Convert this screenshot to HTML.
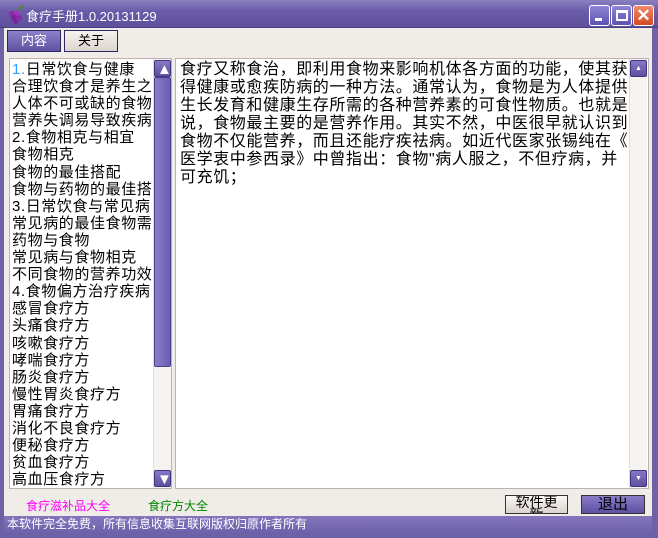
<!DOCTYPE html>
<html><head><meta charset="utf-8"><style>
*{margin:0;padding:0;box-sizing:border-box}
body{width:658px;height:538px;overflow:hidden;background:#fff;font-family:"Liberation Sans","Noto Sans CJK SC","WenQuanYi Zen Hei",sans-serif;position:relative}
.abs{position:absolute}
#win{left:0;top:0;width:658px;height:538px;background:#6f61a8}
#title{left:0;top:0;width:658px;height:28px;background:linear-gradient(#8b80c0,#6a5ca8 40%,#5e509c);border-bottom:1px solid #4a3e84}
#title span{position:absolute;left:26px;top:6px;color:#fff;font-size:13px;}
#body{left:4px;top:28px;width:648px;height:488px;background:#f0ece8}
.tb{top:2px;width:54px;height:22px;font-size:13px;text-align:center;line-height:20px;border:1px solid #2e2860}
#list{left:9px;top:58px;width:163px;height:431px;background:#fff;border:1px solid #bdb2ad;overflow:hidden;padding-top:2px}
#list div{font-size:15px;letter-spacing:0.6px;line-height:17.1px;white-space:nowrap;padding-left:2px}
#txt{left:175px;top:58px;width:474px;height:431px;background:#fff;border:1px solid #bdb2ad}
#txt p{position:absolute;left:4px;top:2px;width:450px;font-size:16px;letter-spacing:0.6px;line-height:18px;word-break:break-all;line-break:anywhere}
.sb{width:18px;background:#f6f3f0;border-left:1px solid #e4dcd8}
.btn{width:17px;height:17px;background:linear-gradient(#8678c4,#5e50a0);border:1px solid #3f3580;border-radius:2px;color:#fff;font-size:7px;text-align:center;line-height:15px}
#status{left:4px;top:516px;width:648px;height:17px;background:linear-gradient(#8376bd,#6e61ab);color:#fff;font-size:12px;line-height:16px;padding-left:3px}
</style></head><body>
<div id="win" class="abs"></div>
<div id="title" class="abs">
<svg class="abs" style="left:6px;top:4px" width="20" height="20"><circle cx="6" cy="10" r="3" fill="#8a2aa8"/><circle cx="11" cy="9" r="3" fill="#9a36b8"/><circle cx="8" cy="14" r="3" fill="#7a209a"/><circle cx="13" cy="14" r="3" fill="#8a2aa8"/><circle cx="10" cy="18" r="2" fill="#7a209a"/><path d="M12 6 L17 2" stroke="#4a8a2a" stroke-width="2"/></svg>
<span>食疗手册1.0.20131129</span>
<div class="abs" style="left:589px;top:5px;width:21px;height:21px;background:linear-gradient(#8f86d8,#5d52b0);border:1px solid #fff;border-radius:3px"><div class="abs" style="left:5px;top:12px;width:7px;height:3px;background:#fff"></div></div>
<div class="abs" style="left:611px;top:5px;width:21px;height:21px;background:linear-gradient(#8f86d8,#5d52b0);border:1px solid #fff;border-radius:3px"><div class="abs" style="left:4px;top:4px;width:12px;height:11px;border:2px solid #fff;border-top-width:3px"></div></div>
<div class="abs" style="left:633px;top:5px;width:21px;height:21px;background:linear-gradient(#f08a6a,#d24a22);border:1px solid #fff;border-radius:3px;color:#fff;font-size:17px;font-weight:bold;text-align:center;line-height:19px">✕</div>
</div>
<div id="body" class="abs">
<div class="abs tb" style="left:3px;background:linear-gradient(#8c80c8,#5f52a2);color:#fff">内容</div>
<div class="abs tb" style="left:60px;background:linear-gradient(#f6f2ee,#ddd4cf);color:#000">关于</div>
</div>
<div id="list" class="abs">
<div><span style="color:#39f">1.</span>日常饮食与健康</div><div>合理饮食才是养生之道</div><div>人体不可或缺的食物营养</div><div>营养失调易导致疾病</div><div>2.食物相克与相宜</div><div>食物相克</div><div>食物的最佳搭配</div><div>食物与药物的最佳搭配</div><div>3.日常饮食与常见病</div><div>常见病的最佳食物需求</div><div>药物与食物</div><div>常见病与食物相克</div><div>不同食物的营养功效</div><div>4.食物偏方治疗疾病</div><div>感冒食疗方</div><div>头痛食疗方</div><div>咳嗽食疗方</div><div>哮喘食疗方</div><div>肠炎食疗方</div><div>慢性胃炎食疗方</div><div>胃痛食疗方</div><div>消化不良食疗方</div><div>便秘食疗方</div><div>贫血食疗方</div><div>高血压食疗方</div><div>低血压食疗方</div>
<div class="abs sb" style="left:143px;top:0;height:429px">
<div class="abs btn" style="left:0;top:1px">▲</div>
<div class="abs" style="left:0;top:18px;width:17px;height:290px;background:linear-gradient(90deg,#8a7cc8,#6c5eb0);border:1px solid #4a3f8c;border-radius:2px"></div>
<div class="abs btn" style="left:0;top:411px">▼</div>
</div>
</div>
<div id="txt" class="abs">
<p>食疗又称食治，即利用食物来影响机体各方面的功能，使其获得健康或愈疾防病的一种方法。通常认为，食物是为人体提供生长发育和健康生存所需的各种营养素的可食性物质。也就是说，食物最主要的是营养作用。其实不然，中医很早就认识到食物不仅能营养，而且还能疗疾祛病。如近代医家张锡纯在《医学衷中参西录》中曾指出：食物"病人服之，不但疗病，并可充饥；</p>
<div class="abs sb" style="left:453px;top:0;height:429px">
<div class="abs btn" style="left:0;top:1px">▲</div>
<div class="abs btn" style="left:0;top:411px">▼</div>
</div>
</div>
<div class="abs" style="left:26px;top:497px;font-size:12px;color:#f0f">食疗滋补品大全</div>
<div class="abs" style="left:148px;top:497px;font-size:12px;color:#080">食疗方大全</div>
<div class="abs" style="left:505px;top:495px;width:63px;height:19px;background:linear-gradient(#faf7f4,#dcd3ce);border:1px solid #333;overflow:hidden;font-size:14px;line-height:12px;text-align:center;padding-top:0">软件更<br>新</div>
<div class="abs" style="left:581px;top:495px;width:64px;height:19px;background:linear-gradient(#8a7cc8,#5e50a2);border:1px solid #333;font-size:15px;line-height:17px;text-align:center;color:#000">退出</div>
<div id="status" class="abs">本软件完全免费，所有信息收集互联网版权归原作者所有</div>
</body></html>
